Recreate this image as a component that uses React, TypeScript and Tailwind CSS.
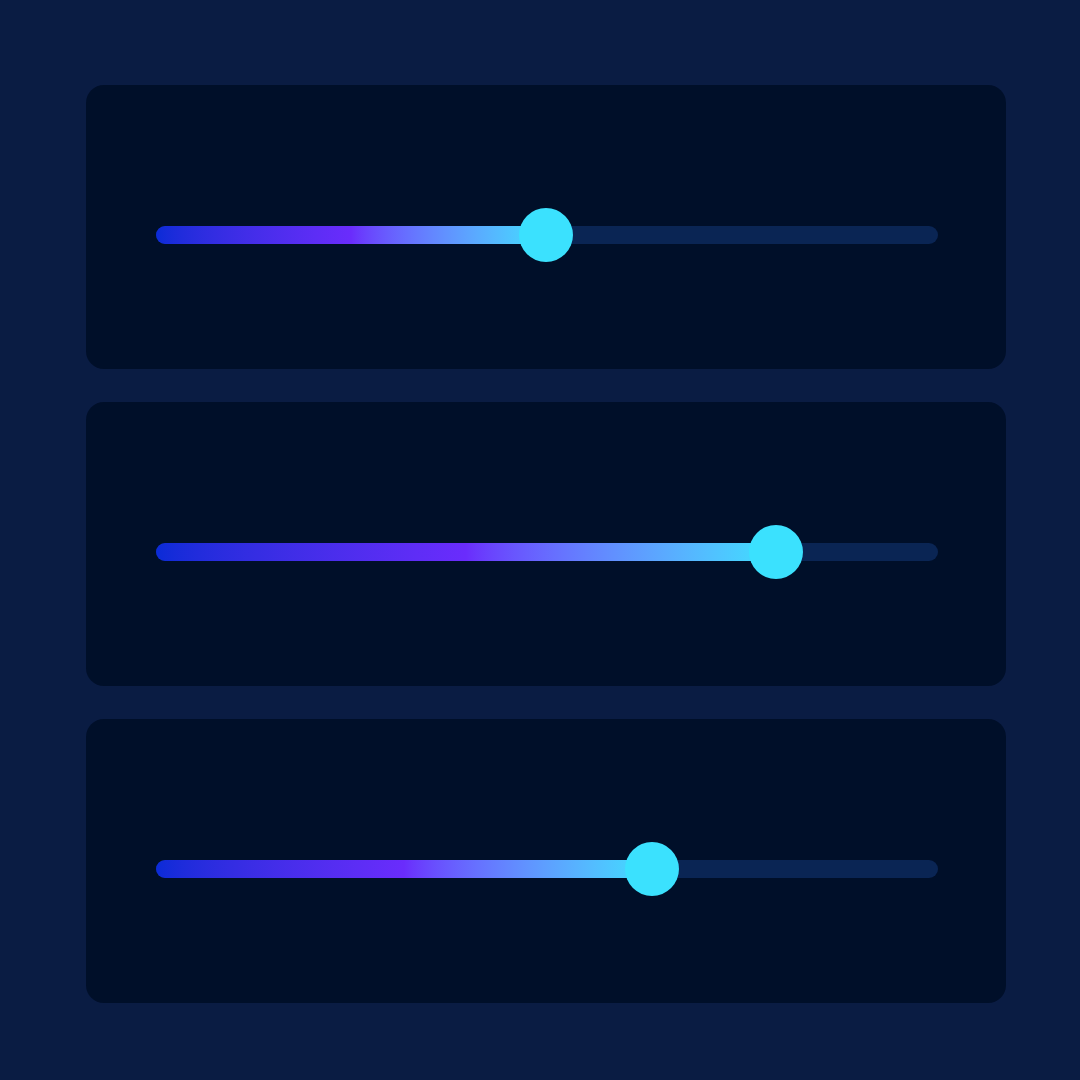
const sliders = [
  { id: 1, value: 49.9 },
  { id: 2, value: 79.3 },
  { id: 3, value: 63.4 },
];

const Slider = ({ value }: { value: number }) => (
  <div className="relative h-[18px] w-full rounded-full bg-[#0a2554]">
    <div
      className="absolute left-0 top-0 h-full rounded-full bg-gradient-to-r from-[#0a2bd7] via-[#6a2cfc] to-[#3ce0fd]"
      style={{ width: `${value}%` }}
    />
    <div
      className="absolute top-1/2 h-[54px] w-[54px] -translate-x-1/2 -translate-y-1/2 rounded-full bg-[#3be1fe]"
      style={{ left: `${value}%` }}
    />
  </div>
);

export default function App() {
  return (
    <div className="flex min-h-[1080px] w-[1080px] flex-col gap-[33px] bg-[#0a1c43] pl-[86px] pr-[74px] pt-[85px]">
      {sliders.map((s) => (
        <div key={s.id} className="h-[284px] rounded-[18px] bg-[#000f29] pl-[70px] pr-[68px] pt-[141px]">
          <Slider value={s.value} />
        </div>
      ))}
    </div>
  );
}
